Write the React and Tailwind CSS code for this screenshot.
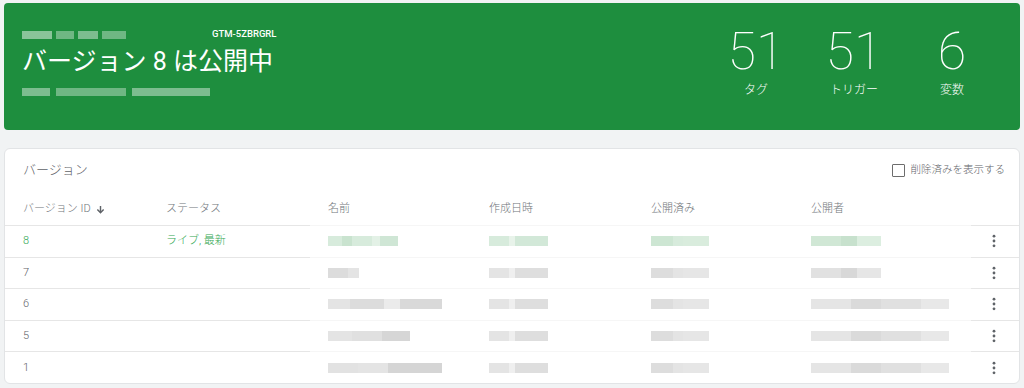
import React from "react";

const FONT = { fontFamily: "Roboto, 'Noto Sans CJK JP', sans-serif" };

// blurred placeholder: list of [width, color]
const Blur = ({ parts }) => (
  <div className="flex h-[10px] blur-[0.6px]">
    {parts.map((p, i) => (
      <div key={i} className="h-full" style={{ width: p[0], background: p[1] }} />
    ))}
  </div>
);

const g = (w, c = "#d7ebdc") => [w, c];
const k = (w, c = "#e4e4e4") => [w, c];

const rows = [
  {
    id: "8",
    status: "ライブ, 最新",
    live: true,
    name: [g(14), g(10, "#c9e3cf"), g(20), g(8, "#e3f1e6"), g(18, "#cfe6d5")],
    created: [g(20), g(6, "#e8f3ea"), g(33, "#d2e8d8")],
    published: [g(22, "#cde6d3"), g(10), g(26, "#d9ecdd")],
    publisher: [g(30, "#d0e7d5"), g(16, "#c7e1cd"), g(24, "#dceee0")],
  },
  {
    id: "7",
    name: [k(20, "#dcdcdc"), k(11)],
    created: [k(20), k(6, "#efefef"), k(33, "#dedede")],
    published: [k(22, "#dddddd"), k(10), k(26, "#e6e6e6")],
    publisher: [k(30, "#e1e1e1"), k(16, "#d8d8d8"), k(24, "#e6e6e6")],
  },
  {
    id: "6",
    name: [k(22), k(34, "#dcdcdc"), k(16, "#ebebeb"), k(42, "#d9d9d9")],
    created: [k(20), k(6, "#efefef"), k(33, "#dedede")],
    published: [k(22, "#dddddd"), k(10), k(26, "#e6e6e6")],
    publisher: [k(40, "#e5e5e5"), k(30, "#dadada"), k(40, "#e0e0e0"), k(28, "#e8e8e8")],
  },
  {
    id: "5",
    name: [k(24), k(30, "#e0e0e0"), k(28, "#d6d6d6")],
    created: [k(20), k(6, "#efefef"), k(33, "#dedede")],
    published: [k(22, "#dddddd"), k(10), k(26, "#e6e6e6")],
    publisher: [k(40, "#e5e5e5"), k(30, "#dadada"), k(40, "#e0e0e0"), k(28, "#e8e8e8")],
  },
  {
    id: "1",
    name: [k(30, "#e2e2e2"), k(30), k(54, "#d5d5d5")],
    created: [k(20), k(6, "#efefef"), k(33, "#dedede")],
    published: [k(22, "#dddddd"), k(10), k(26, "#e6e6e6")],
    publisher: [k(40, "#e5e5e5"), k(30, "#dadada"), k(40, "#e0e0e0"), k(28, "#e8e8e8")],
  },
];

const Kebab = () => (
  <svg width="4" height="14" viewBox="0 0 4 14" fill="#5f6368">
    <circle cx="2" cy="2.2" r="1.4" />
    <circle cx="2" cy="7" r="1.4" />
    <circle cx="2" cy="11.8" r="1.4" />
  </svg>
);

const cols = "grid grid-cols-[143px_162px_161px_162px_160px_178px_1fr]";

const App = () => {
  return (
    <div className="min-h-[388px] bg-[#f1f3f4] px-[4px] pt-[3px]" style={FONT}>
      {/* header card */}
      <div className="flex h-[127px] items-start justify-between rounded-[4px] bg-[#1e8e3e] text-white">
        <div className="pl-[18px] pt-[26px]">
          <div className="flex items-end">
            <div className="flex h-[8px] gap-[4px] opacity-60 blur-[0.5px]">
              <div className="w-[30px] bg-white/80" />
              <div className="w-[18px] bg-white/60" />
              <div className="w-[20px] bg-white/70" />
              <div className="w-[24px] bg-white/60" />
            </div>
            <div className="ml-[86px] text-[9.5px] font-medium leading-none">GTM-5ZBRGRL</div>
          </div>
          <div className="mt-[7px] text-[25px] leading-[32px]">バージョン 8 は公開中</div>
          <div className="mt-[10px] flex h-[8px] gap-[6px] opacity-60 blur-[0.5px]">
            <div className="w-[28px] bg-white/70" />
            <div className="w-[70px] bg-white/60" />
            <div className="w-[78px] bg-white/70" />
          </div>
        </div>
        <div className="flex pr-[19px] pt-[22px]">
          {[
            ["51", "タグ"],
            ["51", "トリガー"],
            ["6", "変数"],
          ].map(([n, l], i) => (
            <div key={i} className="flex w-[98px] flex-col items-center">
              <div className="text-[52px] font-thin leading-[54px]">{n}</div>
              <div className="mt-[3px] text-[12px] font-light leading-[16px]">{l}</div>
            </div>
          ))}
        </div>
      </div>

      {/* versions card */}
      <div className="mt-[18px] h-[236px] overflow-hidden rounded-[6px] border border-[#e2e4e6] bg-white font-light">
        <div className="flex h-[44px] items-center justify-between pl-[18px] pr-[14px]">
          <div className="pb-[2px] text-[13px] text-[#5f6368]">バージョン</div>
          <label className="flex items-center gap-[6px] pb-[2px] text-[10.5px] text-[#5f6368]">
            <span className="h-[13px] w-[13px] rounded-[1px] border-[1.5px] border-[#6d6d6d]" />
            削除済みを表示する
          </label>
        </div>
        <div className={`${cols} h-[33px] text-[11px] text-[#70757a]`}>
          {["バージョン ID", "ステータス", "名前", "作成日時", "公開済み", "公開者", ""].map((h, i) => (
            <div
              key={i}
              className={`flex items-center pl-[18px] ${i < 2 || i === 6 ? "border-b border-[#e6e6e6]" : "border-b border-[#f6f6f6]"}`}
            >
              {h}
              {i === 0 && (
                <svg className="ml-[5px]" width="9" height="9" viewBox="0 0 10 10" fill="none" stroke="#5f6368" strokeWidth="1.6">
                  <path d="M5 1v7.5M1.5 5L5 8.5 8.5 5" />
                </svg>
              )}
            </div>
          ))}
        </div>
        {rows.map((r, ri) => {
          const line = ri < rows.length - 1;
          const strong = line ? "border-b border-[#e6e6e6]" : "";
          const faint = line ? "border-b border-[#f6f6f6]" : "";
          return (
            <div key={r.id} className={`${cols} h-[31.6px] text-[11px]`}>
              <div className={`flex items-center pl-[18px] ${strong} ${r.live ? "text-[#34a853]" : "text-[#5f6368]"}`}>
                {r.id}
              </div>
              <div className={`flex items-center pl-[18px] text-[#34a853] ${strong}`}>{r.status}</div>
              <div className={`flex items-center pl-[18px] ${faint}`}>
                <Blur parts={r.name} />
              </div>
              <div className={`flex items-center pl-[18px] ${faint}`}>
                <Blur parts={r.created} />
              </div>
              <div className={`flex items-center pl-[18px] ${faint}`}>
                <Blur parts={r.published} />
              </div>
              <div className={`flex items-center pl-[18px] ${faint}`}>
                <Blur parts={r.publisher} />
              </div>
              <div className={`flex items-center justify-end pr-[23px] ${strong}`}>
                <Kebab />
              </div>
            </div>
          );
        })}
      </div>
    </div>
  );
};

export default App;
